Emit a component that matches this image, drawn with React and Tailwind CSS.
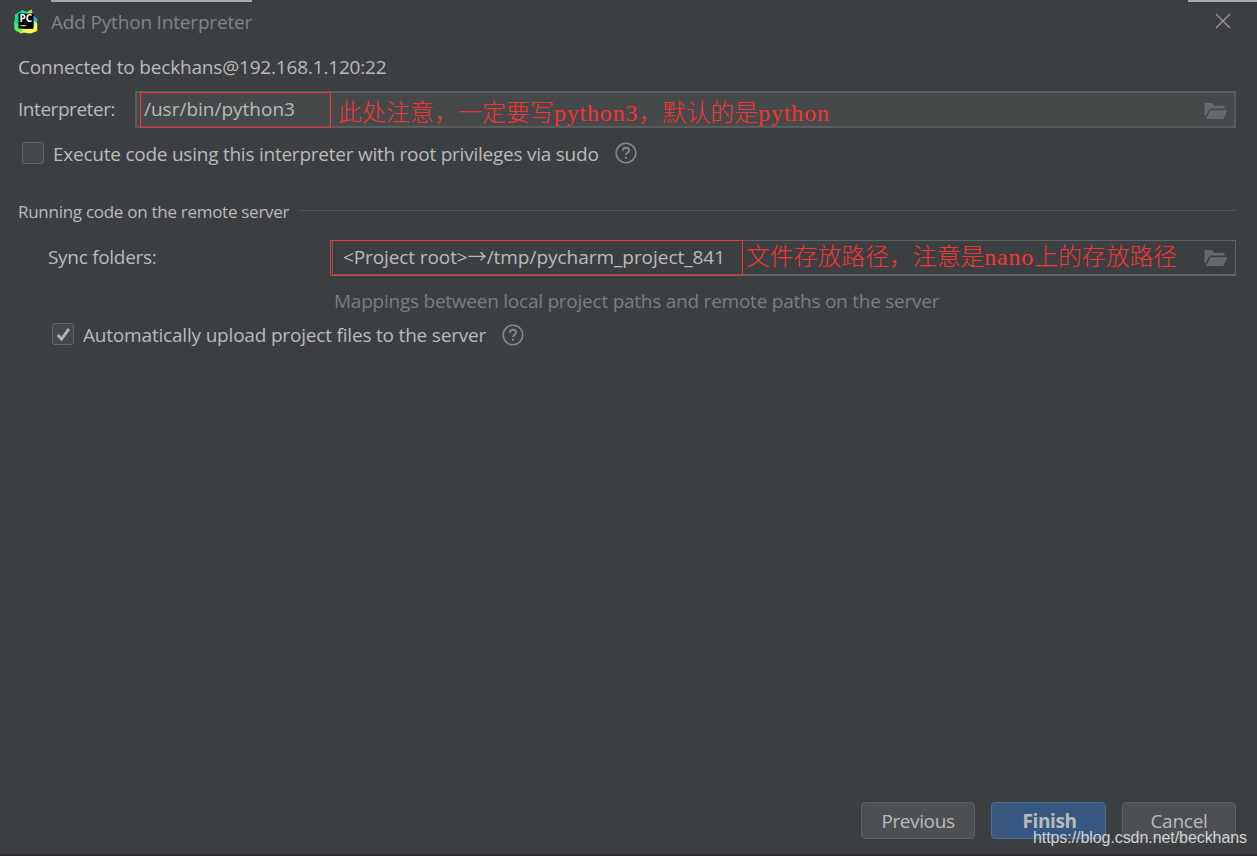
const FolderIcon = () => (
  <svg width="24" height="18" viewBox="0 0 24 18" className="shrink-0" fill="#636b6f">
    <path d="M0.5 13.5V1h7.7l1.8 2.8h10.5v2.7H5.8L1.6 14z" />
    <path d="M6.3 8.3H23.4L19.2 17H2z" />
  </svg>
)

const HelpIcon = () => (
  <svg width="22" height="22" viewBox="0 0 22 22" className="shrink-0" fill="none" stroke="#7f8b91">
    <circle cx="11" cy="11" r="9.8" strokeWidth="1.6" />
    <path d="M7.9 8.7c0-1.8 1.3-2.9 3.1-2.9s3.1 1.1 3.1 2.7c0 2.2-3.1 2.4-3.1 4.6" strokeWidth="1.9" />
    <path d="M11 14.7v2" strokeWidth="2" />
  </svg>
)

const Logo = () => (
  <svg width="24" height="25" viewBox="0 0 24 25" className="shrink-0">
    <path d="M1 5.5 8.5 1 14 3.2 9 14 2.5 22.5 0 19.5z" fill="#21d789" />
    <path d="M12.5 3.5 17.7.3 19 7l-6 3z" fill="#a5ea55" />
    <path d="M19 6.5 23.2 9.7 23 15l-5-2z" fill="#07c3f2" />
    <path d="M0 12.5 5 18l5 6.2L7 24l-5.5-2.5z" fill="#5fe26b" />
    <path d="M3 20h16l1-8 3.2 2.5V22l-6.7 2.6L9 23.5l-2.5 1z" fill="#fcf84a" />
    <path d="M3 19h6l-1 5-5.5-2z" fill="#7be85e" />
    <path d="M4.5 4.5h15v15h-15z" fill="#000" />
    <text x="5.5" y="13.3" fontFamily="Open Sans, sans-serif" fontSize="10" fontWeight="700" fill="#fff">PC</text>
    <path d="M6.5 16.7h5.5" stroke="#ddd" strokeWidth="1.1" />
  </svg>
)

const Checkbox = ({ checked }) => (
  <div className="flex size-[22px] shrink-0 items-center justify-center rounded-[3px] border-[1.5px] border-[#676767] bg-[#43494a]">
    {checked && (
      <svg width="15" height="15" viewBox="0 0 15 15" fill="none" stroke="#b4b4b4" strokeWidth="2.8">
        <path d="M1.8 8l3.7 4L13 1.8" />
      </svg>
    )}
  </div>
)

const Note = ({ className, children }) => (
  <span className={`font-['Liberation_Serif','Noto_Sans_CJK_SC',serif] text-[24px] leading-[32px] font-light text-[#f73434] ${className}`}>
    {children}
  </span>
)

const Latin = ({ children }) => (
  <span className="tracking-[0.8px]">{children}</span>
)

export default function App() {
  return (
    <div className="relative flex h-[856px] w-[1257px] flex-col overflow-hidden border-b-2 border-[#2f3133] bg-[#3c3f41] font-['Open_Sans',sans-serif] text-[19px] leading-7 whitespace-nowrap text-[#bbbbbb]">
      <div className="flex h-0.5 justify-between pl-[51px]">
        <div className="w-[201px] bg-[#a8a8a8]" />
        <div className="w-[69px] bg-[#a8a8a8]" />
      </div>

      <header className="flex h-[42px] items-center pr-[26px] pl-3.5">
        <div className="pb-1"><Logo /></div>
        <h1 className="ml-[13px] pb-0.5 tracking-[-0.18px] text-[#848586]">Add Python Interpreter</h1>
        <svg width="16" height="16" viewBox="0 0 16 16" className="mb-1 ml-auto" stroke="#9a9b9c" strokeWidth="1.4">
          <path d="M1 1l14 14M15 1L1 15" />
        </svg>
      </header>

      <main className="flex flex-1 flex-col pr-[21px] pl-[18px]">
        <p className="mt-[9px] tracking-[-0.18px]">Connected to beckhans@192.168.1.120:22</p>

        <div className="mt-[10px] flex h-[37px] items-center">
          <label className="w-[117px] pb-0.5 tracking-[-0.45px]">Interpreter:</label>
          <div className="relative flex h-[37px] flex-1 items-center border-2 border-[#5a5c5d] bg-[#45494a] pr-1.5">
            <span className="w-[201px] pb-0.5 pl-[7px]">/usr/bin/python3</span>
            <div className="absolute -top-px left-[3px] h-9 w-[191px] border border-[#f73434]" />
            <Note className="pt-1.5">此处注意，一定要写<Latin>python3</Latin>，默认的是<Latin>python</Latin></Note>
            <div className="ml-auto pt-0.5"><FolderIcon /></div>
          </div>
        </div>

        <div className="mt-[11px] flex h-7 items-center pl-1">
          <div className="pb-px"><Checkbox /></div>
          <span className="ml-[9px] pt-0.5 tracking-[-0.24px]">Execute code using this interpreter with root privileges via sudo</span>
          <div className="ml-4"><HelpIcon /></div>
        </div>

        <div className="mt-[29px] flex h-7 items-center text-[17px]">
          <h2 className="pt-1 tracking-[-0.28px]">Running code on the remote server</h2>
          <div className="ml-[9px] h-px flex-1 bg-[#515456]" />
        </div>

        <div className="mt-4 flex h-9 items-center pl-[30px]">
          <label className="w-[284px] pb-0.5 tracking-[-0.3px]">Sync folders:</label>
          <div className="relative flex h-9 flex-1 items-center border border-b-2 border-[#616364] pr-[7px]">
            <div className="absolute -top-px -left-[3px] h-9 w-[413px] border border-[#f73434]" />
            <span className="w-[413px] pb-px pl-[10px]">
              <span className="tracking-[-0.1px]">&lt;Project root&gt;</span>
              <span className="inline-block w-[19px] font-['Noto_Sans_CJK_SC',sans-serif] leading-5">→</span>
              <span className="tracking-[-0.03px]">/tmp/pycharm_project_841</span>
            </span>
            <Note className="pb-0.5 tracking-[-0.17px]">文件存放路径，注意是<Latin>nano</Latin>上的存放路径</Note>
            <div className="ml-auto pt-px"><FolderIcon /></div>
          </div>
        </div>

        <p className="mt-[11px] pl-[316px] tracking-[-0.24px] text-[#7d7e7f]">
          Mappings between local project paths and remote paths on the server
        </p>

        <div className="mt-[6px] flex h-7 items-center pl-[34px]">
          <div className="pb-0.5"><Checkbox checked /></div>
          <span className="ml-[9px] tracking-[-0.19px]">Automatically upload project files to the server</span>
          <div className="ml-4"><HelpIcon /></div>
        </div>
      </main>

      <footer className="flex justify-end gap-4 pr-[21px] pb-[15px]">
        <button className="h-[37px] w-[114px] rounded-[4px] border border-[#5e6060] bg-[#4c5052] tracking-[-0.4px]">Previous</button>
        <button className="h-[37px] w-[115px] rounded-[4px] border border-[#4c708c] bg-[#365880] pl-0.5 font-bold tracking-[-0.4px]">Finish</button>
        <button className="h-[37px] w-[114px] rounded-[4px] border border-[#5e6060] bg-[#4c5052] tracking-[-0.25px]">Cancel</button>
      </footer>

      <span className="absolute right-[10px] bottom-[6px] font-['Liberation_Sans',sans-serif] text-[16px] leading-5 tracking-[-0.07px] text-[#d4d4d4]">
        https://blog.csdn.net/beckhans
      </span>
    </div>
  )
}
